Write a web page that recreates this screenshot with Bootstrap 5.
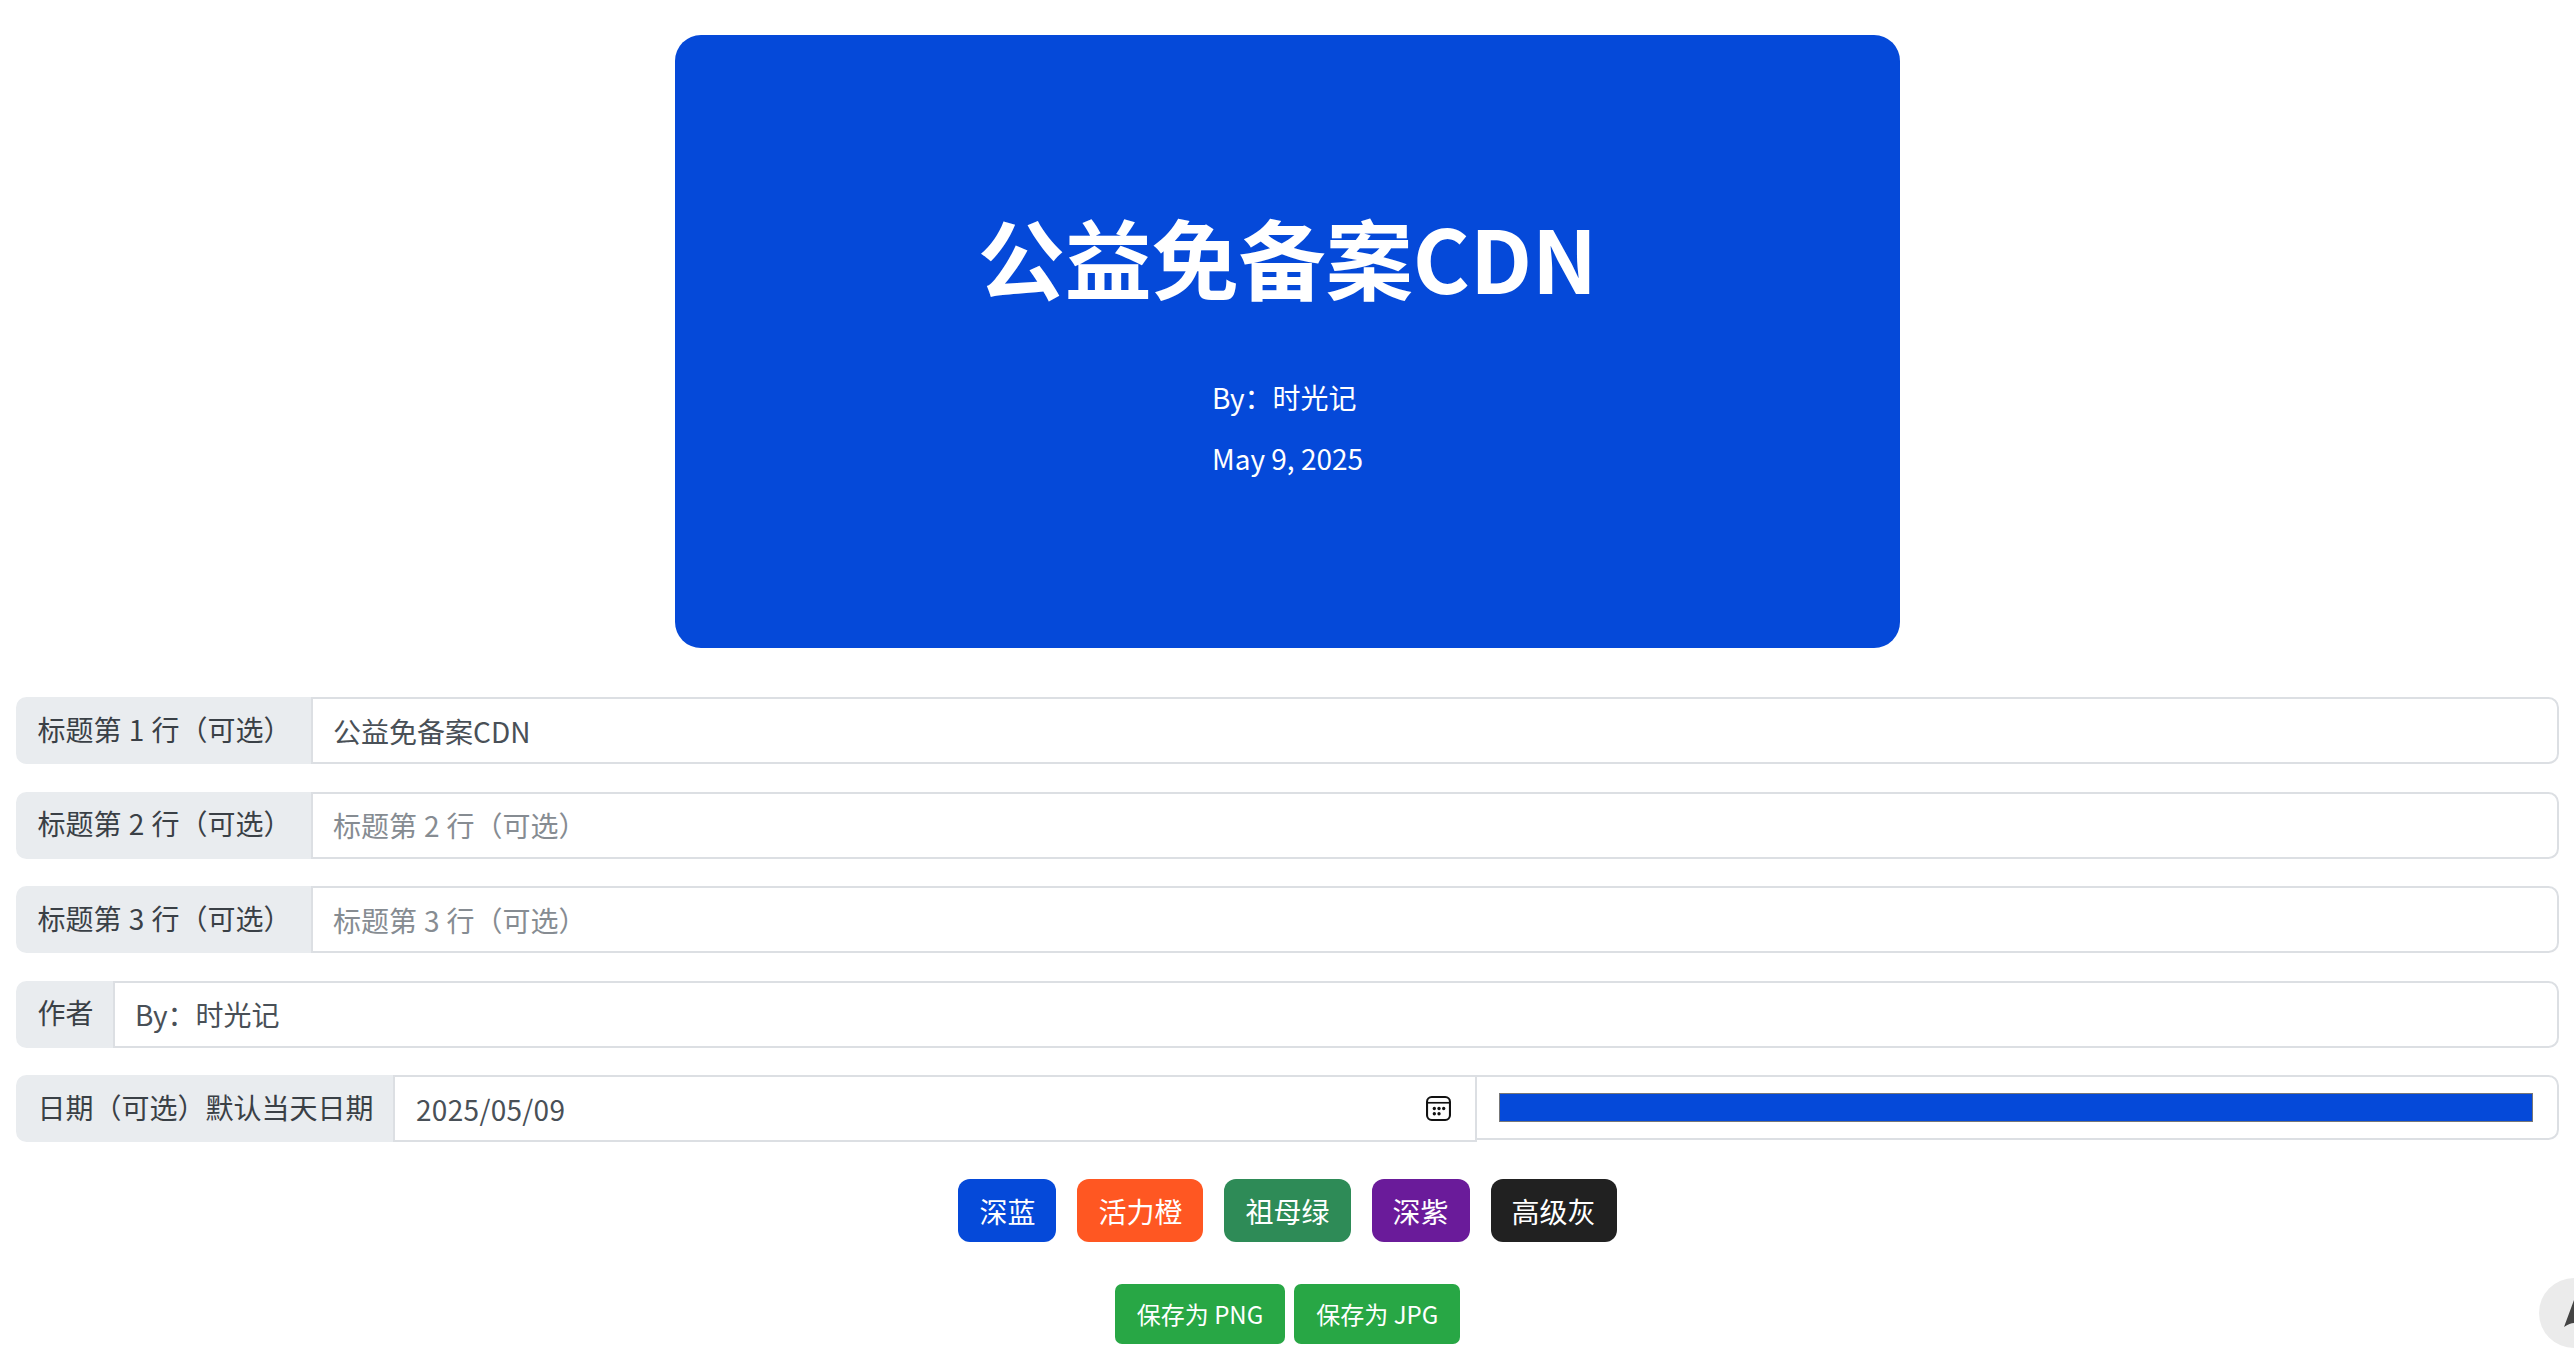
<!DOCTYPE html>
<html lang="zh-CN">
<head>
<meta charset="utf-8">
<title>公益免备案CDN</title>
<link rel="stylesheet" href="https://cdn.jsdelivr.net/npm/bootstrap@5.3.0/dist/css/bootstrap.min.css">
<style>
html{font-size:28px;}
body{font-family:"Noto Sans CJK SC","Noto Sans",sans-serif;overflow:hidden;height:1371px;padding:35px 15px 0 16px;background:#fff;}
.cover{width:1225px;height:612.5px;background:#0549d9;border-radius:26px;color:#fff;}
.cover-title{font-size:87px;font-weight:700;line-height:1.2;margin:0 0 68px;}
.cover-line{font-size:28px;line-height:42px;margin:0 0 19px;}
.form-stack{margin-top:49.5px;}
.field{margin-bottom:29.5px;height:65px;--bs-border-width:2px;}
.field .input-group-text{background:#e9ecef;border-color:#e9ecef;color:#3a4046;padding:0 19.5px 4px;word-spacing:1px;}
.field .form-control{border-color:#dcdfe3;color:#495057;padding-left:20px;}
.field .form-control::placeholder{color:#868c92;word-spacing:.7px;}
.field .date-box{flex:0 0 1084px;gap:12px;padding-left:21px;padding-right:26px;border-right:0;}
.date-value{border:0;outline:0;min-width:0;padding:0;color:#495057;background:transparent;letter-spacing:.3px;}
.cal-icon{width:25px;height:25px;flex:none;}
.field .swatch.form-control-color{flex:1 1 0;width:auto;height:65px;padding:16px 24px 16px 22px;max-width:none;}
.swatch.form-control-color::-webkit-color-swatch{border-radius:0;}
.theme-btn{color:#fff;border:0;height:63px;line-height:42px;padding:10.5px 21px;border-radius:12px;}
.theme-btn:hover{color:#fff;}
.c-blue{background:#0549d9;}
.c-orange{background:#ff5722;}
.c-green{background:#2e8b57;}
.c-purple{background:#6a1b9a;}
.c-gray{background:#212121;}
.theme-row{gap:21px;margin-top:39px;}
.save-row{gap:9px;margin-top:42px;}
.save-btn{background:#28a745;color:#fff;border:0;font-size:24px;height:60px;padding:0 22px;border-radius:7px;}
.save-btn:hover{color:#fff;background:#28a745;}
.float-tool{position:fixed;left:2539px;top:1278px;width:70px;height:70px;border-radius:50%;background:#ebebeb;overflow:hidden;}
.float-tool svg{display:block;width:70px;height:70px;}
</style>
</head>
<body>
<div class="cover mx-auto d-flex flex-column align-items-center justify-content-center text-center">
  <h1 class="cover-title">公益免备案CDN</h1>
  <div class="text-start">
    <p class="cover-line">By：时光记</p>
    <p class="cover-line mb-0">May 9, 2025</p>
  </div>
</div>
<div class="form-stack">
  <div class="input-group field">
    <span class="input-group-text">标题第 1 行（可选）</span>
    <input type="text" class="form-control" value="公益免备案CDN" placeholder="标题第 1 行（可选）">
  </div>
  <div class="input-group field">
    <span class="input-group-text">标题第 2 行（可选）</span>
    <input type="text" class="form-control" placeholder="标题第 2 行（可选）">
  </div>
  <div class="input-group field">
    <span class="input-group-text">标题第 3 行（可选）</span>
    <input type="text" class="form-control" placeholder="标题第 3 行（可选）">
  </div>
  <div class="input-group field">
    <span class="input-group-text">作者</span>
    <input type="text" class="form-control" value="By：时光记">
  </div>
  <div class="input-group field">
    <span class="input-group-text">日期（可选）默认当天日期</span>
    <div class="form-control date-box d-flex align-items-center">
      <input type="text" class="date-value flex-grow-1" value="2025/05/09">
      <svg class="cal-icon" viewBox="0 0 24 24" fill="none" aria-hidden="true">
        <rect x="1" y="1" width="22" height="22" rx="4.5" stroke="#111" stroke-width="2"/>
        <path d="M1.5 6.5h21" stroke="#111" stroke-width="1.6"/>
        <g fill="#111"><circle cx="8" cy="12" r="1.6"/><circle cx="12.5" cy="12" r="1.6"/><circle cx="17" cy="12" r="1.6"/><circle cx="8" cy="17" r="1.6"/><circle cx="12.5" cy="17" r="1.6"/></g>
      </svg>
    </div>
    <input type="color" class="form-control form-control-color swatch" value="#0549d9" aria-label="颜色">
  </div>
</div>
<div class="d-flex justify-content-center theme-row">
  <button type="button" class="btn theme-btn c-blue">深蓝</button>
  <button type="button" class="btn theme-btn c-orange">活力橙</button>
  <button type="button" class="btn theme-btn c-green">祖母绿</button>
  <button type="button" class="btn theme-btn c-purple">深紫</button>
  <button type="button" class="btn theme-btn c-gray">高级灰</button>
</div>
<div class="d-flex justify-content-center save-row">
  <button type="button" class="btn save-btn">保存为 PNG</button>
  <button type="button" class="btn save-btn">保存为 JPG</button>
</div>
<div class="float-tool" aria-hidden="true">
  <svg viewBox="0 0 70 70"><path d="M35 22L25 49Q31 45 35 45Z" fill="#444"/></svg>
</div>
<script src="https://cdn.jsdelivr.net/npm/bootstrap@5.3.0/dist/js/bootstrap.bundle.min.js"></script>
</body>
</html>
